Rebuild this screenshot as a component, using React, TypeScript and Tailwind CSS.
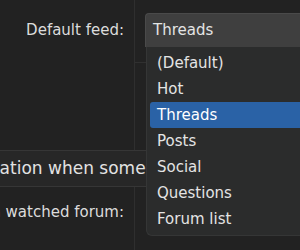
const feeds = ["(Default)", "Hot", "Threads", "Posts", "Social", "Questions", "Forum list"];

export default function App() {
  return (
    <div
      className="relative w-[300px] h-[250px] overflow-hidden bg-[#222222] text-[15px] text-[#dcdcdc]"
      style={{ fontFamily: '"DejaVu Sans", sans-serif' }}
    >
      {/* settings rows */}
      <div className="flex flex-col h-full">
        <div className="grid grid-cols-[135px_1fr] h-[63px]">
          <div className="flex justify-end items-start pt-[19px] pr-[10px] border-r border-[#2f2f2f] leading-[22px]">
            Default feed:
          </div>
          <div className="pl-[10px] pt-[13px] border-b border-[#303030]">
            <div className="h-[34px] rounded-tl-[4px] bg-[#3f3f3f] border-t border-l border-[#4a4a4a] flex items-center pl-[7px] text-[#e4e4e4]">
              Threads
            </div>
          </div>
        </div>

        <div className="grid grid-cols-[135px_1fr] h-[87px]">
          <div className="border-r border-[#2f2f2f]" />
          <div />
        </div>

        <div className="h-[37px] bg-[#272727] border-y border-[#363636] flex items-center overflow-hidden whitespace-nowrap text-[17px] text-[#e2e2e2]">
          <span className="ml-[-53px]">notification when someone replies</span>
        </div>

        <div className="grid grid-cols-[135px_1fr] flex-1">
          <div className="flex justify-end overflow-hidden whitespace-nowrap pt-[14px] pr-[10px] border-r border-[#2f2f2f] leading-[22px]">
            New thread in watched forum:
          </div>
          <div />
        </div>
      </div>

      {/* open dropdown list */}
      <div className="absolute left-[146px] top-[47px] w-[170px] h-[189px] z-10 bg-[#2b2c2c] border-l border-b border-[#353636] rounded-bl-[6px] pt-[3px] pl-[3px]">
        {feeds.map((f) => (
          <div
            key={f}
            className={
              f === "Threads"
                ? "h-[26px] flex items-center pl-[7px] rounded-[3px] bg-[#2a62a6] text-white"
                : "h-[26px] flex items-center pl-[7px] text-[#e4e4e4]"
            }
          >
            {f}
          </div>
        ))}
      </div>
    </div>
  );
}
